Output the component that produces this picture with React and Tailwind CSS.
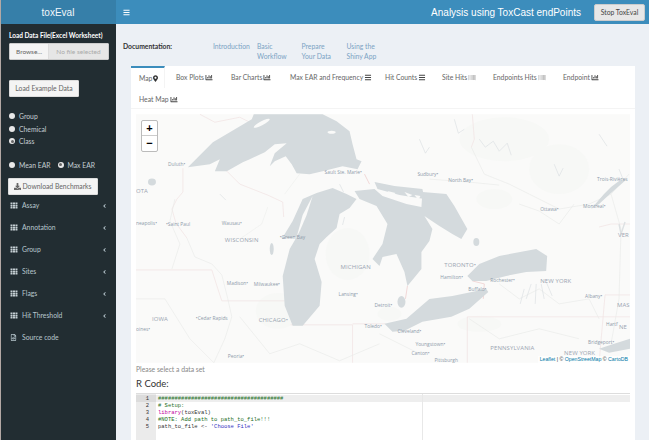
import React from "react";
import { FaBars, FaChartBar, FaMapMarkerAlt, FaBarcode, FaTh, FaDownload, FaRegFileCode, FaAngleLeft } from "react-icons/fa";

const sans = "font-['Lato','Noto_Sans',sans-serif]";

const tabs = [
  ["Box Plots", FaChartBar, "w-[55px]"],
  ["Bar Charts", FaChartBar, "w-[59px]"],
  ["Max EAR and Frequency", FaBars, "w-[95px]"],
  ["Hit Counts", FaBars, "w-[57px]"],
  ["Site Hits", FaBarcode, "w-[51px]"],
  ["Endpoints Hits", FaBarcode, "w-[70px]"],
  ["Endpoint", FaChartBar, "w-[70px]"],
  ["Heat Map", FaChartBar, "w-[70px]"],
];

const menu = ["Assay", "Annotation", "Group", "Sites", "Flags", "Hit Threshold"];

const small = [
  ["Duluth•", 168, 167], ["neapolis•", 136, 226], ["•Saint Paul", 166, 227], ["Wausau•", 222, 226], ["•Green Bay", 280, 240],
  ["Sault Ste. Marie•", 325, 175], ["Madison•", 227, 286], ["Milwaukee•", 254, 287], ["Lansing•", 339, 297], ["Detroit•", 375, 308],
  ["•Cedar Rapids", 196, 321], ["oines•", 136, 332], ["Toledo•", 365, 329], ["Peoria•", 228, 359], ["Sudbury•", 418, 177],
  ["North Bay•", 449, 183], ["Ottawa•", 541, 212], ["Montreal•", 584, 209], ["Trois-Rivières", 598, 182], ["Hamilton•", 441, 280],
  ["Rochester•", 491, 283], ["Buffalo•", 469, 292], ["Albany•", 586, 299], ["Cleveland•", 398, 334], ["Youngstown•", 416, 347],
  ["Canton•", 412, 356], ["Hartf", 607, 327], ["Bridgeport•", 589, 345], ["Pittsburgh", 435, 363],
];
const big = [
  ["OTA", 136, 194], ["WISCONSIN", 225, 243], ["MICHIGAN", 341, 270], ["IOWA", 152, 322], ["CHICAGO•", 259, 323],
  ["TORONTO•", 445, 268], ["NEW YORK", 541, 284], ["PENNSYLVANIA", 491, 351], ["VER", 619, 238], ["MAS", 618, 308], ["NE", 620, 330], ["NEW YORK", 565, 356],
];

function MapArt() {
  const water = "#d4dadd";
  return (
    <svg viewBox="136 115 495 249" className="block w-full h-full">
      <rect x="136" y="115" width="495" height="249" fill="#fafaf9" />
      <g fill="#f7f8f6">
        <ellipse cx="505" cy="140" rx="45" ry="22" />
        <ellipse cx="495" cy="200" rx="18" ry="10" />
        <ellipse cx="560" cy="170" rx="30" ry="25" />
        <ellipse cx="278" cy="312" rx="22" ry="18" />
        <ellipse cx="348" cy="255" rx="22" ry="26" />
        <ellipse cx="480" cy="325" rx="22" ry="8" />
        <ellipse cx="390" cy="315" rx="12" ry="7" />
      </g>
      <g fill="none" stroke="#f1e2e2" strokeWidth="0.7">
        <path d="M136 271H212L218 290 222 302H285M291 326H353V364M353 325H386" />
        <path d="M183 169V193L177 200 172 210 176 224 187 239M227 172L240 185 268 196 283 203 284 218" />
        <path d="M200 115L215 123 240 118 252 124M468 318V364M468 318H570L631 318M631 296H606L600 364M612 225H631M600 228L612 225" />
        <path d="M473 115L475 140 472 148" />
      </g>
      <path d="M365 175L370 185M473 282L485 285 484 300M408 287L406 300" fill="none" stroke="#efcfcf" strokeWidth="0.8" />
      <g fill="none" stroke="#e8eae8" strokeWidth="0.6">
        <path d="M187 239L195 258 212 265 222 276 228 300 232 318 225 340 214 364" />
        <path d="M175 200L170 222 180 245 172 270M136 300L165 300 190 340 214 364M240 318L270 355 300 345 340 362 380 345" />
        <path d="M472 148L485 175 510 185 530 195 560 210 590 205 612 195 630 175M540 212L560 225 575 205M612 195L622 230 620 300 612 345" />
        <path d="M430 180L470 183 500 186M520 205L540 212M380 335L420 355M500 285L520 300 540 290 560 305 590 300 600 320M470 320L500 340 540 330 580 340" />
        <path d="M285 195L300 175M240 240L262 225 268 208" strokeOpacity="0.7" />
      </g>
      <g fill="none" stroke="#dde1e3" strokeWidth="0.7">
        <path d="M532 285L527 300M537 285L536 305M542 285L545 300M547 283L553 297M525 290L521 305" />
        <path d="M480 140l6 8 8-6 6 10 8-8 4 12M420 140l6 14 4-6M455 120l4 14 6-4M555 165l5 12 4-8M600 135l8 12M620 170l4 10M220 195l6 6M340 185l4 8M345 218l-2 8M300 232l4-6" />
        <path d="M620 225l2 10 4-12" strokeWidth="1.4" />
      </g>
      <g fill={water}>
        {/* Superior */}
        <path d="M188 168L213 143 230 133 252 120 254 115H323L337 122 350 132 353 145 357 160 362 162 358 170 343 167 323 172 310 175 297 174 292 165 286 157 275 162 270 167 275 154 287 144 275 145 265 153 250 160 243 163 227 172 215 172 220 160 210 165Z" />
        {/* Michigan */}
        <path d="M282 240L293 222 303 200 317 194 333 189 347 195 357 200 350 209 340 215 337 229 327 238 320 245 315 260 322 283 320 307 303 327 293 327 285 307 283 277 290 250 297 238 Z" />
        {/* Huron */}
        <path d="M355 192L375 190 383 197 407 205 422 208 423 193 447 195 455 207 468 230 462 240 453 235 440 227 425 217 433 230 430 242 422 253 422 270 408 287 405 273 397 255 383 258 380 267 373 260 383 245 388 225 377 207 360 200Z" />
        {/* North Channel */}
        <path d="M375 183L395 187 423 190 425 200 400 196 378 190Z" />
        {/* Erie */}
        <path d="M385 325L407 320 430 300 453 297 487 290 489 293 470 310 452 318 423 323 405 332 393 333Z" />
        {/* Ontario */}
        <path d="M468 277L480 265 500 257 537 250 548 257 547 272 527 273 507 277 487 282 473 282Z" />
        <ellipse cx="402" cy="303" rx="4" ry="6" />
        <ellipse cx="272" cy="250" rx="2" ry="6" />
        <ellipse cx="477" cy="243" rx="3" ry="4" />
        <path d="M600 350L612 346 631 340V350L610 354Z" />
        <path d="M592 210L605 195 612 188 620 182 628 180 612 194 600 205Z" />
        <ellipse cx="152" cy="183" rx="4" ry="3.5" />
      </g>
      <g fill="#fafaf9">
        <path d="M297 238L303 216 313 197 307 216 301 230Z" />
        <path d="M388 192l8 2-3 3ZM405 193l8 3-4 2ZM415 196l6 1-2 4Z" />
        <ellipse cx="262" cy="124" rx="9" ry="2" transform="rotate(-28 262 124)" />
        <ellipse cx="332" cy="133" rx="4" ry="1.5" />
      </g>
      <g fill="#8f9bab" fontFamily="'Open Sans',sans-serif">
        {small.map(([t, x, y]) => (
          <text key={t + x} x={x} y={y} fontSize="4.9">{t}</text>
        ))}
      </g>
      <g fill="#9aa5b2" fontFamily="'Open Sans',sans-serif">
        {big.map(([t, x, y]) => (
          <text key={t + x} x={x} y={y} fontSize="6" letterSpacing="0.1">{t}</text>
        ))}
      </g>
    </svg>
  );
}

export default function App() {
  return (
    <div className={`flex w-[649px] h-[440px] overflow-hidden bg-[#ecf0f5] text-[#444] ${sans}`}>
      <div className="w-[1px] shrink-0 bg-[#b3a8a4]" />
      <div className="w-[115px] shrink-0 flex flex-col bg-[#222d32]">
        <div className="h-[24px] flex items-center justify-center bg-[#367fa9] text-[#f2f7fa] text-[10px] font-['Liberation_Sans',sans-serif] pr-[1px]">
          toxEval
        </div>
        <div className="pl-[8px] pt-[7px] text-[6.5px] font-bold leading-[9px] text-white whitespace-nowrap">
          Load Data File(Excel Worksheet)
        </div>
        <div className="ml-[8px] mt-[3px] w-[100px] h-[17px] flex text-[6.5px] border border-[#ccc] rounded-[1px]">
          <div className="w-[39px] flex items-center justify-center bg-[#f4f4f4] text-[#666] border-r border-[#ddd]">Browse...</div>
          <div className="flex-1 flex items-center justify-center bg-[#e6e6e6] text-[#aaa]">No file selected</div>
        </div>
        <button className="ml-[8px] mt-[20px] w-[70px] h-[17px] flex items-center justify-center bg-[#f4f4f4] border border-[#ddd] rounded-[1px] text-[6.8px] text-[#666]">
          Load Example Data
        </button>
        <div className="mt-[13px] flex flex-col text-[6.8px] leading-[12.5px] text-[#c4ced2] ml-[8px]">
          {["Group", "Chemical", "Class"].map((t) => (
            <div key={t} className="flex items-center gap-[4px] h-[12.5px]">
              <span className="w-[6px] h-[6px] rounded-full bg-[#e8e8e8] flex items-center justify-center">
                {t === "Class" && <span className="w-[3px] h-[3px] rounded-full bg-[#666]" />}
              </span>
              {t}
            </div>
          ))}
        </div>
        <div className="mt-[11px] ml-[8px] flex items-center text-[6.8px] leading-[12px] text-[#c4ced2]">
          <span className="w-[6px] h-[6px] rounded-full bg-[#e8e8e8] mr-[4px]" />
          <span className="mr-[7px]">Mean EAR</span>
          <span className="w-[6px] h-[6px] rounded-full bg-[#e8e8e8] flex items-center justify-center mr-[4px]">
            <span className="w-[3px] h-[3px] rounded-full bg-[#666]" />
          </span>
          Max EAR
        </div>
        <button className="ml-[7px] mt-[7px] w-[90px] h-[17px] flex items-center justify-center gap-[1px] bg-[#f4f4f4] border border-[#ddd] rounded-[1px] text-[6.8px] text-[#666]">
          <FaDownload className="w-[7px] h-[7px]" />
          Download Benchmarks
        </button>
        <div className="flex flex-col text-[6.8px] text-[#b8c7ce]">
          {menu.map((m) => (
            <div key={m} className="h-[22px] flex items-center pl-[9px] pr-[9px]">
              <FaTh className="w-[8px] h-[7px] mr-[4px] text-[#c4ced2]" />
              <span className="flex-1">{m}</span>
              <FaAngleLeft className="w-[5px] h-[6px]" />
            </div>
          ))}
          <div className="h-[22px] flex items-center pl-[9px]">
            <FaRegFileCode className="w-[7px] h-[7px] mr-[5px]" />
            Source code
          </div>
        </div>
      </div>

      <div className="flex-1 min-w-0 flex flex-col">
        <div className="h-[24px] shrink-0 flex items-center bg-[#3c8dbc] text-white">
          <FaBars className="ml-[7px] w-[7px] h-[7px]" />
          <div className="ml-auto mr-[13px] text-[10px] font-['Liberation_Sans',sans-serif]">Analysis using ToxCast endPoints</div>
          <button className="mr-[4px] w-[51px] h-[17px] flex items-center justify-center bg-[#e7e7e7] border border-[#ccc] rounded-[2px] text-[6.8px] text-[#444]">
            Stop ToxEval
          </button>
        </div>

        <div className="flex h-[42px] pt-[17px] pl-[7px] text-[6.8px] leading-[10px]">
          <div className="w-[90px] font-bold text-[#333]">Documentation:</div>
          <div className="w-[44px] text-[#7ba3c4]">Introduction</div>
          <div className="w-[44.5px] text-[#7ba3c4]">Basic<br />Workflow</div>
          <div className="w-[45px] text-[#7ba3c4]">Prepare<br />Your Data</div>
          <div className="text-[#7ba3c4]">Using the<br />Shiny App</div>
        </div>

        <div className="ml-[15px] mr-[14px] flex-1 bg-white flex flex-col min-h-0">
          <div className="h-[43px] shrink-0 flex flex-wrap content-start border-b border-[#f4f4f4] text-[6.8px] text-[#666]">
            <div className="w-[34px] h-[22px] mr-[3px] pl-[8px] flex items-center gap-[1px] border-t-2 border-[#3c8dbc] border-r border-r-[#f4f4f4]">
              Map<FaMapMarkerAlt className="w-[5px] h-[7px] text-[#333]" />
            </div>
            {tabs.map(([t, I, w]) => (
              <div key={t} className={`${w} h-[22px] pl-[8px] flex items-center gap-[1px] whitespace-nowrap`}>
                {t}
                <I className={`${t === "Site Hits" || t === "Endpoints Hits" ? "text-[#999]" : "text-[#444]"} w-[8px] h-[7px] shrink-0`} />
              </div>
            ))}
          </div>
          <div className="relative mx-[5px] mt-[5px] h-[249px] shrink-0">
            <MapArt />
            <div className="absolute left-[5px] top-[6px] w-[17px] rounded-[2px] border border-[#bbb] bg-white text-black font-['Liberation_Sans',sans-serif] font-bold">
              <div className="h-[15px] flex items-center justify-center text-[11px] leading-none border-b border-[#ccc]">+</div>
              <div className="h-[15px] flex items-center justify-center text-[11px] leading-none">−</div>
            </div>
            <div className="absolute right-0 bottom-0 px-[2px] h-[7px] flex items-center bg-white/70 text-[5.2px] text-[#333] whitespace-nowrap font-['Liberation_Sans',sans-serif]">
              <span className="text-[#0078a8]">Leaflet</span>&nbsp;| ©&nbsp;<span className="text-[#0078a8]">OpenStreetMap</span>&nbsp;©&nbsp;<span className="text-[#0078a8]">CartoDB</span>
            </div>
          </div>
          <div className="mx-[5px] mt-[2px] text-[6.8px] leading-[9px] text-[#888]">Please select a data set</div>
          <div className="mx-[5px] mt-[4px] text-[9.5px] leading-[12px] text-[#333]">R Code:</div>
          <div className="mx-[5px] mt-[3px] flex-1 min-h-0 flex bg-white border-t border-[#ddd] font-['Liberation_Mono',monospace] text-[5.5px] leading-[7px]">
            <div className="w-[20px] shrink-0 bg-[#ebebeb] text-[#333] pr-[7px] text-right pt-[1px]">
              <div className="bg-[#dcdcdc] -mr-[7px] pr-[7px]">1</div>
              <div>2</div><div>3</div><div>4</div><div>5</div>
            </div>
            <div className="flex-1 relative pt-[1px] pl-[2px] whitespace-pre">
              <div className="absolute left-0 right-0 top-[1px] h-[7px] bg-[#eeeeee]" />
              <div className="absolute left-[266px] top-0 bottom-0 w-[1px] bg-[#e8e8e8]" />
              <div className="relative text-[#236e24]">######################################</div>
              <div className="relative text-[#236e24]"># Setup:</div>
              <div className="relative text-[#333]"><span className="text-[#c000a0]">library</span>(toxEval)</div>
              <div className="relative text-[#236e24]">#NOTE: Add path to path_to_file!!!</div>
              <div className="relative text-[#333]">path_to_file &lt;- <span className="text-[#3333c0]">'Choose File'</span></div>
            </div>
          </div>
        </div>
      </div>
    </div>
  );
}
